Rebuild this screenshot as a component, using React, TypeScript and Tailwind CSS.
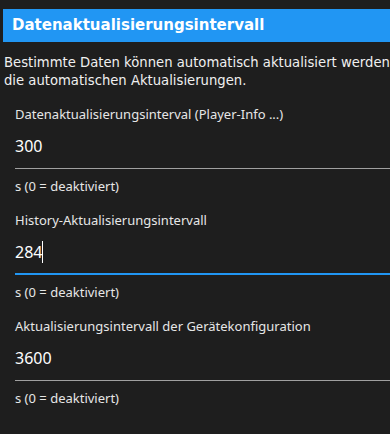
import { useState } from 'react';

interface Field {
  id: string;
  label: string;
  value: string;
  focused?: boolean;
}

const fields: Field[] = [
  { id: 'player', label: 'Datenaktualisierungsinterval (Player-Info ...)', value: '300' },
  { id: 'history', label: 'History-Aktualisierungsintervall', value: '284', focused: true },
  { id: 'device', label: 'Aktualisierungsintervall der Gerätekonfiguration', value: '3600' },
];

function IntervalField({ field }: { field: Field }) {
  const [value, setValue] = useState(field.value);
  return (
    <div className="pl-[15px] h-[106px] pt-[6px]">
      <label className="block text-[13px] leading-[18px] text-[#e6e6e6] font-['Noto_Sans',sans-serif]">
        {field.label}
      </label>
      <div
        className={`mt-[11px] h-[35px] relative ${
          field.focused ? 'border-b-2 border-[#2196f3]' : 'border-b border-[#a0a0a0]'
        }`}
      >
        <input
          value={value}
          onChange={e => setValue(e.target.value)}
          className="w-full bg-transparent outline-none text-[16px] leading-[24px] text-white font-['Noto_Sans',sans-serif]"
        />
        {/* caret of the focused input */}
        {field.focused && (
          <span className="absolute left-[27px] top-[1px] w-px h-[22px] bg-white" />
        )}
      </div>
      <p className="mt-[8px] text-[13px] leading-[18px] text-[#e6e6e6] font-['Noto_Sans',sans-serif]">
        s (0 = deaktiviert)
      </p>
    </div>
  );
}

export default function App() {
  return (
    <div className="w-[390px] h-[434px] bg-[#1e1e1e] overflow-hidden pt-[9px]">
      <div className="ml-[3px] h-[33px] bg-[#2196f3] flex items-center pl-[9px]">
        <h2 className="text-[15px] font-bold text-white font-['DejaVu_Sans',sans-serif]">
          Datenaktualisierungsintervall
        </h2>
      </div>

      <div className="mt-[12px] pl-[4px] text-[13.2px] leading-[18px] text-[#f0f0f0] font-['DejaVu_Sans',sans-serif] whitespace-nowrap">
        <div>Bestimmte Daten können automatisch aktualisiert werden. Hier konfigurieren Sie</div>
        <div>die automatischen Aktualisierungen.</div>
      </div>

      <div className="mt-[9px]">
        {fields.map(field => (
          <IntervalField key={field.id} field={field} />
        ))}
      </div>
    </div>
  );
}
